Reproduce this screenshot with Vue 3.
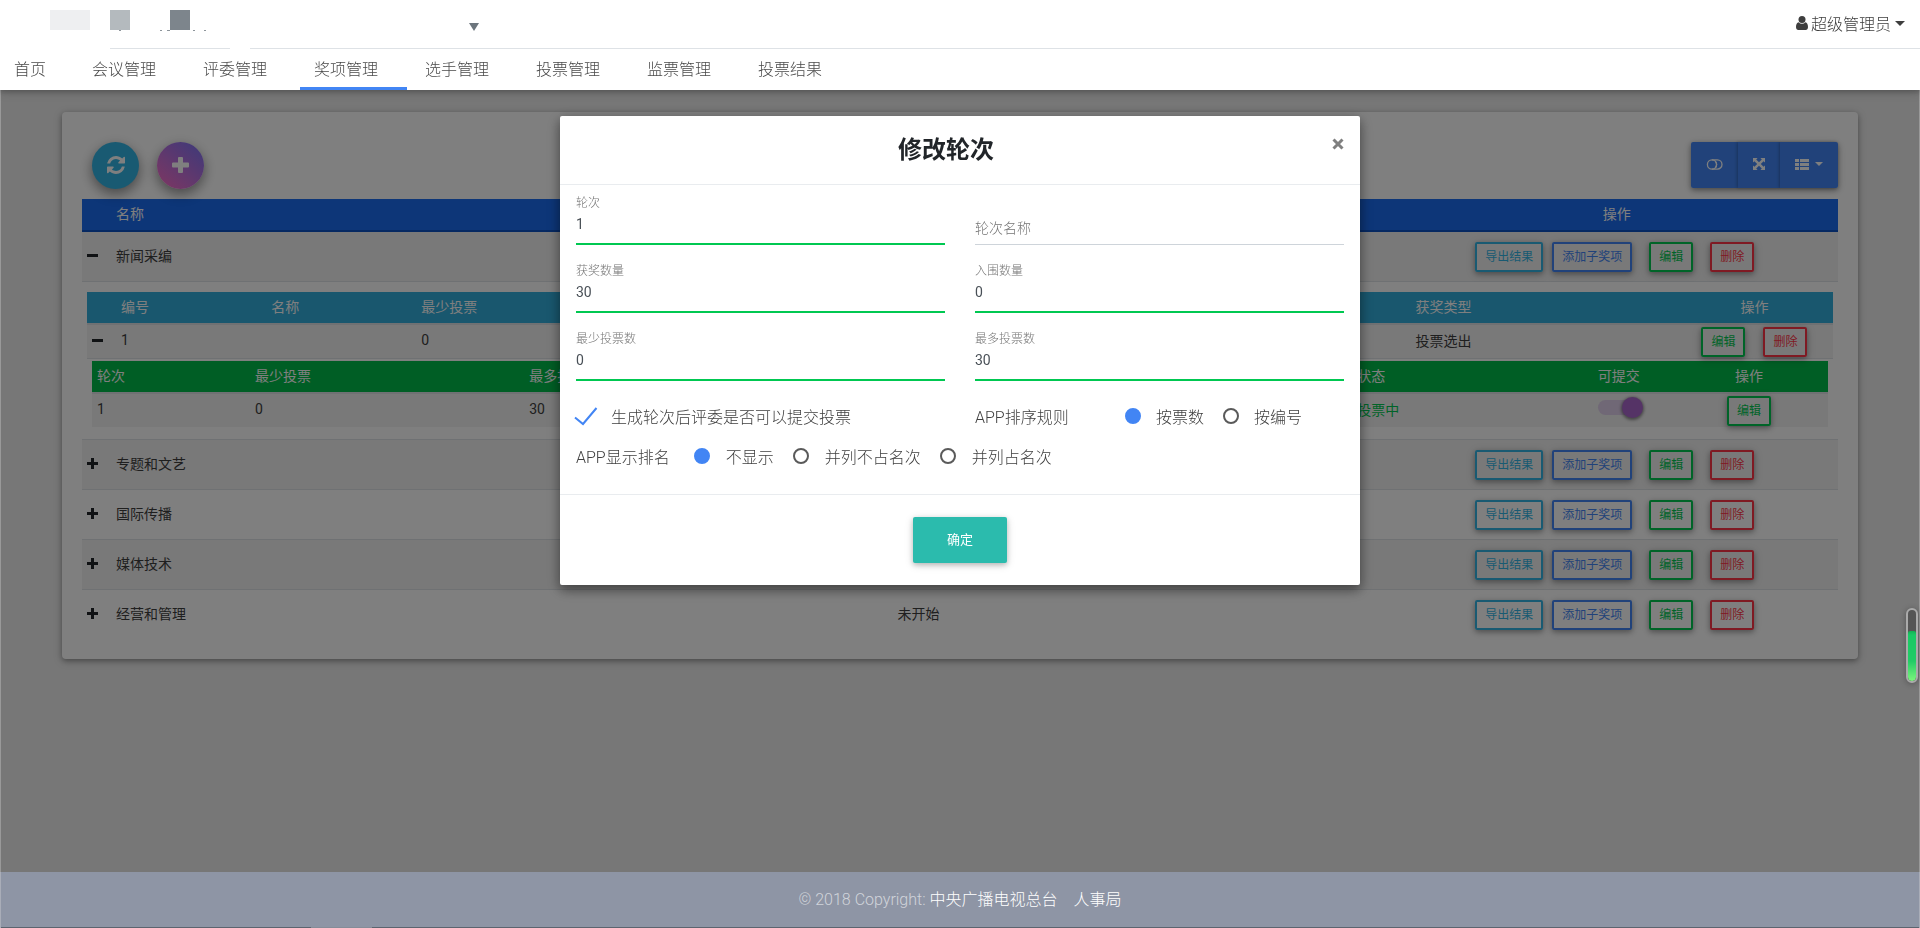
<script setup>
import { ref, reactive } from 'vue'

const navItems = ['首页', '会议管理', '评委管理', '奖项管理', '选手管理', '投票管理', '监票管理', '投票结果']
const activeNav = '奖项管理'

const awards = ref([
  { name: '新闻采编', status: '投票中', open: true },
  { name: '专题和文艺', status: '未开始', open: false },
  { name: '国际传播', status: '未开始', open: false },
  { name: '媒体技术', status: '未开始', open: false },
  { name: '经营和管理', status: '未开始', open: false }
])

const fields = reactive([
  { id: 'round', label: '轮次', value: '1' },
  { id: 'round-name', label: '轮次名称', value: '' },
  { id: 'award-count', label: '获奖数量', value: '30' },
  { id: 'final-count', label: '入围数量', value: '0' },
  { id: 'min-votes', label: '最少投票数', value: '0' },
  { id: 'max-votes', label: '最多投票数', value: '30' }
])

const canSubmit = ref(true)
const submitOpen = ref(true)
const sortRule = ref('按票数')
const rankRule = ref('不显示')
</script>

<template>
  <div class="page">
    <header class="top">
      <div class="brand-row">
        <svg class="logo" width="160" height="22" viewBox="0 0 160 22" aria-hidden="true">
          <rect width="40" height="20" fill="#eeeff1" />
          <rect x="60" width="20" height="20" fill="#b4babe" />
          <rect x="120" width="20" height="20" fill="#7d858c" />
          <path d="M69 20.500h2M110 20.500h2M117 20.500h3M143 20.500h2M154 20.500h2" stroke="#8d959b" />
        </svg>
        <button class="picker" type="button" aria-label="选择会议">
          <svg width="10" height="8" viewBox="0 0 10 8"><path d="M0 0h10L5 8z" fill="#6c757d" /></svg>
        </button>
        <button class="user" type="button">
          <svg width="12" height="14" viewBox="0 0 12 14" fill="#3e3e3e">
            <circle cx="6" cy="3.600" r="3.500" />
            <path d="M2.600 6.200C1 6.600 0 8.400 0 11c0 1.800 1 3 2.300 3h7.400C11 14 12 12.800 12 11c0-2.600-1-4.400-2.600-4.800a4.600 4.600 0 0 1-6.800 0z" />
          </svg>
          <span>超级管理员</span>
          <svg width="10" height="5" viewBox="0 0 10 5"><path d="M0 0h10L5 5z" fill="#3e3e3e" /></svg>
        </button>
      </div>
      <div class="rules"><i class="rule-short"></i><i class="rule-long"></i></div>
      <nav class="nav">
        <a v-for="item in navItems" :key="item" href="#" :class="{ active: item === activeNav }">{{ item }}</a>
      </nav>
    </header>

    <main class="main">
      <section class="card">
        <div class="toolbar">
          <button class="round info" type="button" aria-label="刷新">
            <svg width="18" height="18" viewBox="0 0 1536 1536" fill="#fff">
              <path d="M1511 928q0 5-1 7-64 268-268 434.500T764 1536q-146 0-282.500-55T238 1324l-129 129q-19 19-45 19t-45-19-19-45V960q0-26 19-45t45-19h448q26 0 45 19t19 45-19 45l-137 137q71 66 161 102t187 36q134 0 250-65t186-179q11-17 53-117 8-23 30-23h192q13 0 22.500 9.500t9.500 22.500zm25-800v448q0 26-19 45t-45 19h-448q-26 0-45-19t-19-45 19-45l138-138Q969 256 768 256q-134 0-250 65T332 500q-11 17-53 117-8 23-30 23H50q-13 0-22.500-9.500T18 608v-7q65-268 270-434.500T768 0q146 0 284 55.500T1297 212l130-129q19-19 45-19t45 19 19 45z" />
            </svg>
          </button>
          <button class="round purple" type="button" aria-label="新增">
            <svg width="17" height="16" viewBox="0 0 17 16" fill="#fff">
              <path d="M7 0h3q1 0 1 1v4.500h5q1 0 1 1v3q0 1-1 1h-5V15q0 1-1 1H7q-1 0-1-1v-4.500H1q-1 0-1-1v-3q0-1 1-1h5V1q0-1 1-1z" />
            </svg>
          </button>
          <div class="tools">
            <button type="button" aria-label="切换视图">
              <svg width="17" height="11" viewBox="0 0 17 11" fill="none" stroke="#fff" stroke-width="1.300">
                <circle cx="6" cy="5.500" r="4.600" />
                <path d="M6 .9h5.400a4.600 4.600 0 0 1 0 9.200H6M9.200 2.200a4.600 4.600 0 0 1 0 6.600" />
              </svg>
            </button>
            <button type="button" aria-label="全屏">
              <svg width="12" height="12" viewBox="0 0 12 12" fill="#fff">
                <path d="M0 0h4.600L3.200 1.400 6 4.200l2.800-2.800L7.400 0H12v4.600l-1.400-1.400L7.800 6l2.800 2.800L12 7.400V12H7.400l1.400-1.400L6 7.800l-2.800 2.800L4.600 12H0V7.400l1.400 1.400L4.200 6 1.400 3.200 0 4.600z" />
              </svg>
            </button>
            <button type="button" aria-label="选择列">
              <svg width="14" height="11" viewBox="0 0 14 11" fill="#fff">
                <path d="M0 0h4v3H0zM5 0h9v3H5zM0 4h4v3H0zM5 4h9v3H5zM0 8h4v3H0zM5 8h9v3H5z" />
              </svg>
              <svg width="8" height="4" viewBox="0 0 8 4"><path d="M0 0h8L4 4z" fill="#fff" /></svg>
            </button>
          </div>
        </div>

        <table class="grid awards">
          <colgroup><col class="toggle-col" /><col class="name-col" /><col /><col class="act-col" /></colgroup>
          <thead>
            <tr><th></th><th>名称</th><th></th><th class="center">操作</th></tr>
          </thead>
          <tbody>
            <template v-for="(a, i) in awards" :key="a.name">
              <tr class="award" :class="{ odd: i < 1 || i % 2 === 1, first: i === 0 }">
                <td>
                  <button class="fold" type="button" :aria-label="a.open ? '收起' : '展开'" @click="a.open = !a.open">
                    <svg width="11" height="11" viewBox="0 0 11 11">
                      <path d="M0 4h11v3H0z" /><path v-if="!a.open" d="M4 0h3v11H4z" />
                    </svg>
                  </button>
                </td>
                <td>{{ a.name }}</td>
                <td><template v-if="i === awards.length - 1">{{ a.status }}</template></td>
                <td class="ops">
                  <div class="actions four">
                    <button class="btn cyan" type="button">导出结果</button>
                    <button class="btn blue" type="button">添加子奖项</button>
                    <button class="btn green apart" type="button">编辑</button>
                    <button class="btn red apart" type="button">删除</button>
                  </div>
                </td>
              </tr>
              <tr v-if="a.open && i === 0">
                <td colspan="4" class="detail">
                  <table class="grid sub">
                    <colgroup>
                      <col class="toggle-col" /><col class="no-col" /><col class="no-col" /><col />
                      <col class="type-col" /><col class="edit-col" />
                    </colgroup>
                    <thead>
                      <tr>
                        <th></th><th>编号</th><th>名称</th><th>最少投票</th><th>获奖类型</th><th class="center">操作</th>
                      </tr>
                    </thead>
                    <tbody>
                      <tr class="odd">
                        <td>
                          <button class="fold" type="button" aria-label="收起">
                            <svg width="11" height="11" viewBox="0 0 11 11"><path d="M0 4h11v3H0z" /></svg>
                          </button>
                        </td>
                        <td>1</td><td></td><td>0</td><td>投票选出</td>
                        <td class="ops">
                          <div class="actions pair">
                            <button class="btn green" type="button">编辑</button>
                            <button class="btn red" type="button">删除</button>
                          </div>
                        </td>
                      </tr>
                      <tr>
                        <td colspan="6" class="detail inner">
                          <table class="grid rounds">
                            <colgroup>
                              <col class="last-col" /><col class="min-col" /><col />
                              <col class="state-col" /><col class="switch-col" /><col class="last-col" />
                            </colgroup>
                            <thead>
                              <tr>
                                <th>轮次</th><th>最少投票</th><th>最多投票</th>
                                <th>状态</th><th class="center">可提交</th><th class="center">操作</th>
                              </tr>
                            </thead>
                            <tbody>
                              <tr class="odd">
                                <td>1</td><td>0</td><td>30</td>
                                <td class="voting">投票中</td>
                                <td class="center switch-cell"><input v-model="submitOpen" class="switch" type="checkbox" aria-label="可提交" /></td>
                                <td class="ops"><div class="actions"><button class="btn green" type="button">编辑</button></div></td>
                              </tr>
                            </tbody>
                          </table>
                        </td>
                      </tr>
                    </tbody>
                  </table>
                </td>
              </tr>
            </template>
          </tbody>
        </table>
      </section>
    </main>

    <footer class="foot">
      <p>© 2018 Copyright: <a href="#">中央广播电视总台　人事局</a></p>
    </footer>

    <div class="backdrop">
      <form class="modal" role="dialog" aria-labelledby="modal-title" @submit.prevent>
        <div class="modal-head">
          <h1 id="modal-title">修改轮次</h1>
          <button class="close" type="button" aria-label="关闭">
            <svg width="12" height="12" viewBox="0 0 12 12"><path d="M1.500 1.500l9 9M10.500 1.500l-9 9" stroke="#7f7f7f" stroke-width="3" /></svg>
          </button>
        </div>
        <div class="modal-body">
          <div class="columns">
            <div v-for="f in fields" :key="f.id" class="field" :class="{ empty: !f.value }">
              <label :for="f.id">{{ f.label }}</label>
              <input :id="f.id" v-model="f.value" type="text" />
            </div>
          </div>
          <div class="columns choices">
            <label class="choice">
              <span class="tick">
                <input v-model="canSubmit" type="checkbox" />
                <svg v-if="canSubmit" width="22" height="18" viewBox="0 0 22 18"><path d="M-1 10.500L7 17 20.500 1" fill="none" stroke="#4285f4" stroke-width="2" /></svg>
              </span>
              生成轮次后评委是否可以提交投票
            </label>
            <div class="options" role="radiogroup" aria-labelledby="sort-name">
              <span id="sort-name" class="sort-name">APP排序规则</span>
              <label v-for="o in ['按票数', '按编号']" :key="o"><input v-model="sortRule" type="radio" name="sort" :value="o" />{{ o }}</label>
            </div>
          </div>
          <div class="options ranks" role="radiogroup" aria-labelledby="rank-name">
            <span id="rank-name" class="rank-name">APP显示排名</span>
            <label v-for="o in ['不显示', '并列不占名次', '并列占名次']" :key="o"><input v-model="rankRule" type="radio" name="rank" :value="o" />{{ o }}</label>
          </div>
        </div>
        <div class="modal-foot"><button class="submit" type="submit">确定</button></div>
      </form>
    </div>

    <div class="gauge" aria-hidden="true"><i></i></div>
  </div>
</template>

<style>
body {
  margin: 0;
  background: #eee;
}
</style>

<style scoped>
* {
  box-sizing: border-box;
}
.page {
  display: flex;
  flex-direction: column;
  min-height: 100vh;
  font-family: Roboto, "Noto Sans CJK SC", sans-serif;
  font-size: 14px;
  font-weight: 300;
  color: #3e3e3e;
}
button {
  font: inherit;
  color: inherit;
  margin: 0;
  padding: 0;
  border: 0;
  background: none;
  cursor: pointer;
}
svg {
  display: block;
  flex: none;
}
a {
  text-decoration: none;
}

/* top bar */
.top {
  position: relative;
  z-index: 20;
  height: 90px;
  background: #fff;
  box-shadow: 0 2px 5px rgba(0, 0, 0, .2), 0 2px 10px rgba(0, 0, 0, .16);
}
.brand-row {
  display: flex;
  align-items: center;
  height: 48px;
  padding: 0 15px 2px 50px;
}
.logo {
  align-self: flex-start;
  margin-top: 10px;
}
.picker {
  margin-left: 259px;
  padding-top: 7px;
}
.user {
  display: flex;
  align-items: center;
  gap: 3px;
  margin-left: auto;
  font-size: 16px;
}
.user span {
  margin-right: 1px;
}
.rules {
  display: flex;
  gap: 20px;
  height: 1px;
  padding-left: 110px;
}
.rule-short {
  width: 120px;
  background: #dee2e6;
}
.rule-long {
  flex: 1;
  background: #dee2e6;
}
.nav {
  display: flex;
  gap: 4px;
  height: 41px;
}
.nav a {
  padding: 0 29px 0 14px;
  border-bottom: 3px solid transparent;
  font-size: 16px;
  line-height: 41px;
  height: 41px;
  color: #4a4a4a;
}
.nav a:first-child {
  padding-right: 28px;
}
.nav a.active {
  border-color: #4285f4;
}

/* card */
.main {
  flex: 1;
  padding: 22px 61px;
  border: solid #999;
  border-width: 0 1px;
}
.card {
  padding: 30px 20px 20px;
  border-radius: 4px;
  background: #fff;
  box-shadow: 0 2px 5px rgba(0, 0, 0, .26), 0 2px 10px rgba(0, 0, 0, .2);
}
.toolbar {
  display: flex;
  gap: 18px;
  height: 57px;
  padding-left: 10px;
}
.round {
  display: flex;
  align-items: center;
  justify-content: center;
  width: 47px;
  height: 47px;
  border-radius: 50%;
  box-shadow: 0 5px 11px rgba(0, 0, 0, .28), 0 4px 15px rgba(0, 0, 0, .2);
}
.round svg {
  margin-bottom: 2px;
}
.info {
  background: #33b5e5;
}
.purple {
  background: linear-gradient(40deg, #ff6ec4, #7873f5);
}
.tools {
  display: flex;
  height: 46px;
  margin-left: auto;
  border-radius: 2px;
  box-shadow: 0 2px 5px rgba(0, 0, 0, .3), 0 2px 10px rgba(0, 0, 0, .2);
}
.tools button {
  display: flex;
  align-items: center;
  gap: 6px;
  padding: 0 15px 2px;
  background: #4285f4;
  box-shadow: -1px 0 3px rgba(0, 0, 0, .25);
}
.tools button:first-child {
  border-radius: 2px 0 0 2px;
  box-shadow: none;
}
.tools button:last-child {
  border-radius: 0 2px 2px 0;
}

/* tables */
.grid {
  width: 100%;
  table-layout: fixed;
  border-collapse: separate;
  border-spacing: 0;
  font-weight: 400;
}
th,
td {
  padding: 0 5px 3px;
  text-align: left;
  vertical-align: middle;
  white-space: nowrap;
}
td.ops {
  padding-bottom: 0;
}
td.switch-cell {
  padding-bottom: 7px;
}
th {
  height: 33px;
  border-bottom: 2px solid #dee2e6;
  background-clip: padding-box;
  color: #fff;
  font-weight: 400;
}
.center {
  text-align: center;
}
.toggle-col {
  width: 29px;
}
.name-col {
  width: 45%;
}
.name-col {
  width: 44.5%;
}
.act-col {
  width: 25.2%;
}
.no-col {
  width: 8.6%;
}
.type-col {
  width: 15.2%;
}
.edit-col {
  width: 9%;
}
.last-col {
  width: 9.1%;
}
.min-col {
  width: 15.8%;
}
.state-col {
  width: 12.4%;
}
.switch-col {
  width: 5.9%;
}
.awards > thead th {
  background-color: #1a6cf0;
  border-bottom-color: #0c52c4;
}
.sub > thead th {
  background-color: #32aedc;
}
.rounds > thead th {
  background-color: #00bc4a;
}
.odd > td {
  background: #f2f2f2;
}
.award > td {
  height: 50px;
  border-top: 1px solid #dee2e6;
}
.award.first > td {
  height: 49px;
  border-top: 0;
}
.sub .odd > td {
  height: 33px;
}
.detail {
  padding: 10px 5px;
  border-top: 1px solid #dee2e6;
}
.detail.inner {
  padding: 2px 5px;
}
.voting {
  color: #00c851;
}
.fold {
  display: block;
  fill: #212529;
}
.actions {
  display: flex;
  justify-content: center;
  gap: 9px;
}
.actions.four {
  padding-right: 4px;
}
.actions.pair {
  gap: 18px;
}
.apart {
  margin-left: 8px;
}
.btn {
  height: 30px;
  padding: 0 8px;
  border: 2px solid;
  border-radius: 2px;
  font-size: 12px;
  line-height: 24px;
  box-shadow: 0 2px 5px rgba(0, 0, 0, .26), 0 2px 10px rgba(0, 0, 0, .18);
}
.cyan {
  color: #33b5e5;
}
.blue {
  color: #4285f4;
}
.green {
  color: #00c851;
}
.red {
  color: #ff3547;
}
.switch {
  appearance: none;
  display: inline-flex;
  align-items: center;
  justify-content: flex-end;
  width: 41px;
  height: 15px;
  margin: 0;
  border-radius: 15px;
  background: #e0d0ec;
  vertical-align: middle;
}
.switch::before {
  content: "";
  flex: none;
  width: 21px;
  height: 21px;
  margin-right: -4px;
  border-radius: 50%;
  background: #aa66cc;
  box-shadow: 0 1px 3px 1px rgba(0, 0, 0, .4);
}

/* footer */
.foot {
  position: relative;
  z-index: 20;
  height: 56px;
  border: solid #a9adb8;
  border-width: 0 1px;
  background: #8e95a5;
  font-size: 16px;
  line-height: 55px;
  text-align: center;
  color: rgba(255, 255, 255, .6);
}
.foot::after {
  content: "";
  display: block;
  height: 1px;
  background: linear-gradient(90deg, #5c646f 310px, #858c98 310px, #858c98 371px, #5c646f 371px);
}
.foot p {
  margin: 0;
}
.foot a {
  color: #fff;
}

/* dialog */
.backdrop {
  position: fixed;
  inset: 0 1px;
  z-index: 10;
  display: flex;
  justify-content: center;
  align-items: flex-start;
  padding-top: 116px;
  background: rgba(0, 0, 0, .5);
}
.modal {
  width: 800px;
  max-width: 100%;
  border-radius: 2px;
  background: #fff;
  box-shadow: 0 5px 11px rgba(0, 0, 0, .3), 0 4px 15px rgba(0, 0, 0, .25);
}
.modal-head {
  position: relative;
  height: 69px;
  padding-right: 28px;
  border-bottom: 1px solid #e9ecef;
}
.modal-head h1 {
  margin: 0;
  font-size: 24px;
  font-weight: 700;
  line-height: 68px;
  text-align: center;
  color: #212529;
}
.close {
  position: absolute;
  top: 22px;
  right: 16px;
}
.modal-body {
  padding: 7px 16px 26px;
}
.columns {
  display: grid;
  grid-template-columns: 1fr 1fr;
  gap: 15px 30px;
}
.field {
  display: grid;
  grid-template-rows: 21px 32px;
}
.field label {
  font-size: 12px;
  line-height: 22px;
  color: #757575;
}
.field input {
  width: 100%;
  padding: 0 0 8px;
  border: 0;
  border-bottom: 2px solid #00c851;
  outline: 0;
  background: none;
  font: inherit;
  font-weight: 400;
  color: #495057;
}
.field.empty label {
  grid-area: 1 / 1 / 3 / 2;
  align-self: end;
  padding-bottom: 6px;
  font-size: 14px;
}
.field.empty input {
  grid-area: 2 / 1 / 3 / 2;
  border-bottom: 1px solid #ced4da;
}
.choices {
  margin-top: 23px;
  font-size: 16px;
}
.choice,
.options,
.options label {
  display: flex;
  align-items: center;
  height: 24px;
}
.choice {
  gap: 13px;
}
.options {
  gap: 19px;
  font-size: 16px;
}
.options label {
  gap: 15px;
}
.ranks {
  margin-top: 16px;
}
.ranks label {
  gap: 16px;
}
.sort-name {
  width: 131px;
}
.rank-name {
  margin-right: 5px;
}
.tick {
  display: grid;
}
.tick > * {
  grid-area: 1 / 1 / 2 / 2;
  overflow: visible;
}
.tick input {
  width: 22px;
  height: 18px;
  margin: 0;
  opacity: 0;
}
input[type="radio"] {
  appearance: none;
  width: 16px;
  height: 16px;
  margin: 0;
  border: 2px solid #5a5a5a;
  border-radius: 50%;
}
input[type="radio"]:checked {
  border-color: #4285f4;
  background: #4285f4;
}
.modal-foot {
  padding: 22px;
  border-top: 1px solid #e9ecef;
  text-align: center;
}
.submit {
  display: block;
  width: 94px;
  height: 46px;
  margin: 0 auto;
  padding-bottom: 3px;
  border-radius: 2px;
  background: #2bbbad;
  box-shadow: 0 2px 5px rgba(0, 0, 0, .2), 0 2px 10px rgba(0, 0, 0, .14);
  color: #fff;
  font-size: 13px;
  font-weight: 400;
}

/* floating level meter */
.gauge {
  position: fixed;
  right: 2px;
  bottom: 245px;
  z-index: 30;
  display: flex;
  align-items: flex-end;
  width: 12px;
  height: 75px;
  border: 2px solid #aaa;
  border-radius: 6px;
  background: #555;
  box-shadow: 0 1px 6px rgba(0, 0, 0, .3);
  overflow: hidden;
}
.gauge i {
  width: 100%;
  height: 50px;
  border-radius: 2px 2px 4px 4px;
  background: linear-gradient(#12b053, #18c964 8%, #22cc66 60%, #7df57d);
}
</style>
